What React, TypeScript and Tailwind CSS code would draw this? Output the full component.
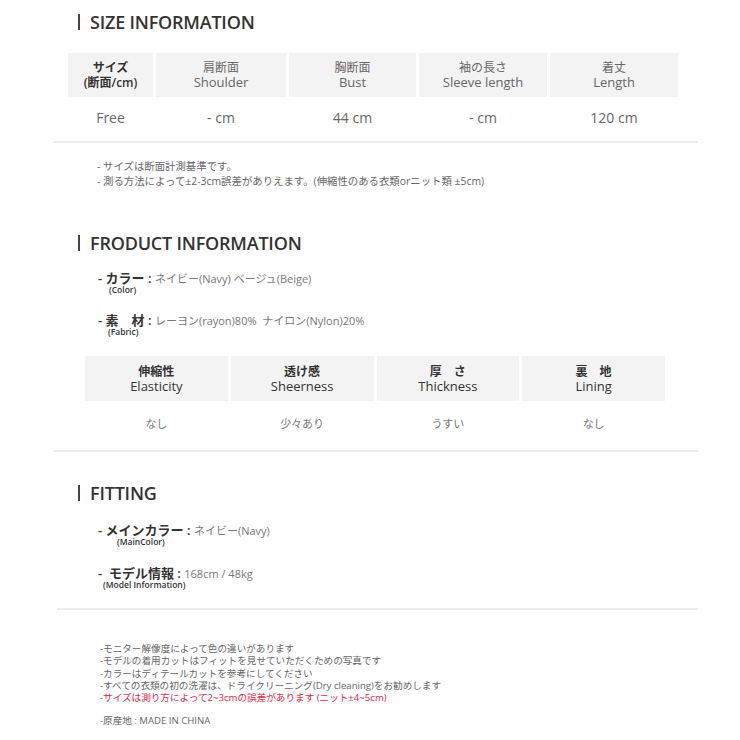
import React from "react";

type Cell = { jp: string; en: string };

const sizeHead: Cell[] = [
  { jp: "肩断面", en: "Shoulder" },
  { jp: "胸断面", en: "Bust" },
  { jp: "袖の長さ", en: "Sleeve length" },
  { jp: "着丈", en: "Length" },
];
const sizeRow = ["Free", "- cm", "44 cm", "- cm", "120 cm"];

const fabricHead: Cell[] = [
  { jp: "伸縮性", en: "Elasticity" },
  { jp: "透け感", en: "Sheerness" },
  { jp: "厚　さ", en: "Thickness" },
  { jp: "裏　地", en: "Lining" },
];
const fabricRow = ["なし", "少々あり", "うすい", "なし"];

const font = { fontFamily: '"Open Sans", "Noto Sans CJK JP", sans-serif' };

function Title({ text }: { text: string }) {
  return (
    <div className="flex items-center h-6 pl-[25px] text-[18px] font-semibold text-[#333] tracking-[-0.2px]">
      <span className="w-[2px] h-[16px] bg-[#444] mr-[10px]" />
      {text}
    </div>
  );
}

function Item({ label, value, sub, subPad }: { label: string; value: string; sub: string; subPad: string }) {
  return (
    <div className="flex flex-col">
      <div className="flex items-baseline h-[14px] leading-[14px]">
        <span className="text-[13px] font-semibold text-[#333] whitespace-pre">{label}</span>
        <span className="text-[11px] text-[#777] whitespace-pre">{value}</span>
      </div>
      <div className={`text-[8.5px] leading-[9px] font-semibold text-[#333] ${subPad}`}>{sub}</div>
    </div>
  );
}

export default function App() {
  return (
    <div className="w-[740px] h-[740px] bg-white pl-[53px] pt-[10px] overflow-hidden" style={font}>
      <div className="w-[645px] flex flex-col">
        {/* SIZE INFORMATION */}
        <Title text="SIZE INFORMATION" />
        <div className="ml-[15px] w-[610px] mt-[19px]">
          <div className="grid grid-cols-[85px_130px_127px_128px_128px] gap-x-[3px] h-[44px]">
            <div className="bg-[#f4f3f3] flex flex-col items-center justify-center text-[12px] leading-[15px] font-semibold text-[#333]">
              <span>サイズ</span>
              <span>(断面/cm)</span>
            </div>
            {sizeHead.map((c, i) => (
              <div key={i} className="bg-[#f4f3f3] flex flex-col items-center justify-center text-[#666] leading-[15px]">
                <span className="text-[12px]">{c.jp}</span>
                <span className="text-[13px]">{c.en}</span>
              </div>
            ))}
          </div>
          <div className="grid grid-cols-[85px_130px_127px_128px_128px] gap-x-[3px] h-[44px] items-center">
            {sizeRow.map((v, i) => (
              <div key={i} className="text-center text-[14px] text-[#666] pb-[3px]">{v}</div>
            ))}
          </div>
        </div>
        <div className="h-[2px] bg-[#ececec]" />
        <div className="mt-[16px] pl-[44px] text-[10.4px] leading-[15px] text-[#666]">
          <div>- サイズは断面計測基準です。</div>
          <div>- 測る方法によって±2-3cm誤差がありえます。(伸縮性のある衣類orニット類 ±5cm)</div>
        </div>

        {/* PRODUCT INFORMATION */}
        <div className="mt-[42px]">
          <Title text="FRODUCT INFORMATION" />
        </div>
        <div className="pl-[45px] mt-[16px] flex flex-col gap-[19px]">
          <Item label="- カラー : " value="ネイビー(Navy) ベージュ(Beige)" sub="(Color)" subPad="pl-[11px]" />
          <Item label="- 素　材 : " value="レーヨン(rayon)80%  ナイロン(Nylon)20%" sub="(Fabric)" subPad="pl-[10px]" />
        </div>
        <div className="ml-[32px] w-[580px] mt-[20px]">
          <div className="grid grid-cols-4 gap-x-[3px] h-[45px]">
            {fabricHead.map((c, i) => (
              <div key={i} className="bg-[#f4f3f3] flex flex-col items-center justify-center leading-[15px] text-[#333]">
                <span className="text-[12px] font-semibold whitespace-pre">{c.jp}</span>
                <span className="text-[13px]">{c.en}</span>
              </div>
            ))}
          </div>
          <div className="grid grid-cols-4 gap-x-[3px] h-[49px] items-center">
            {fabricRow.map((v, i) => (
              <div key={i} className="text-center text-[11px] text-[#777] pb-[3px]">{v}</div>
            ))}
          </div>
        </div>
        <div className="h-[2px] bg-[#ececec]" />

        {/* FITTING */}
        <div className="mt-[29px]">
          <Title text="FITTING" />
        </div>
        <div className="pl-[45px] mt-[18px] flex flex-col gap-[20px]">
          <Item label="- メインカラー : " value="ネイビー(Navy)" sub="(MainColor)" subPad="pl-[19px]" />
          <Item label="-  モデル情報 : " value="168cm / 48kg" sub="(Model Information)" subPad="pl-[5px]" />
        </div>
        <div className="h-[2px] bg-[#ececec] mt-[19px] ml-[4px]" />

        <div className="mt-[33px] pl-[47px] text-[9.6px] leading-[12.25px] text-[#666]">
          <div>-モニター解像度によって色の違いがあります</div>
          <div>-モデルの着用カットはフィットを見せていただくための写真です</div>
          <div>-カラーはディテールカットを参考にしてください</div>
          <div>-すべての衣類の初の洗濯は、ドライクリーニング(Dry cleaning)をお勧めします</div>
          <div className="text-[#e0283f]">-サイズは測り方によって2~3cmの誤差があります (ニット±4~5cm)</div>
          <div className="mt-[11px]">-原産地 : MADE IN CHINA</div>
        </div>
      </div>
    </div>
  );
}
